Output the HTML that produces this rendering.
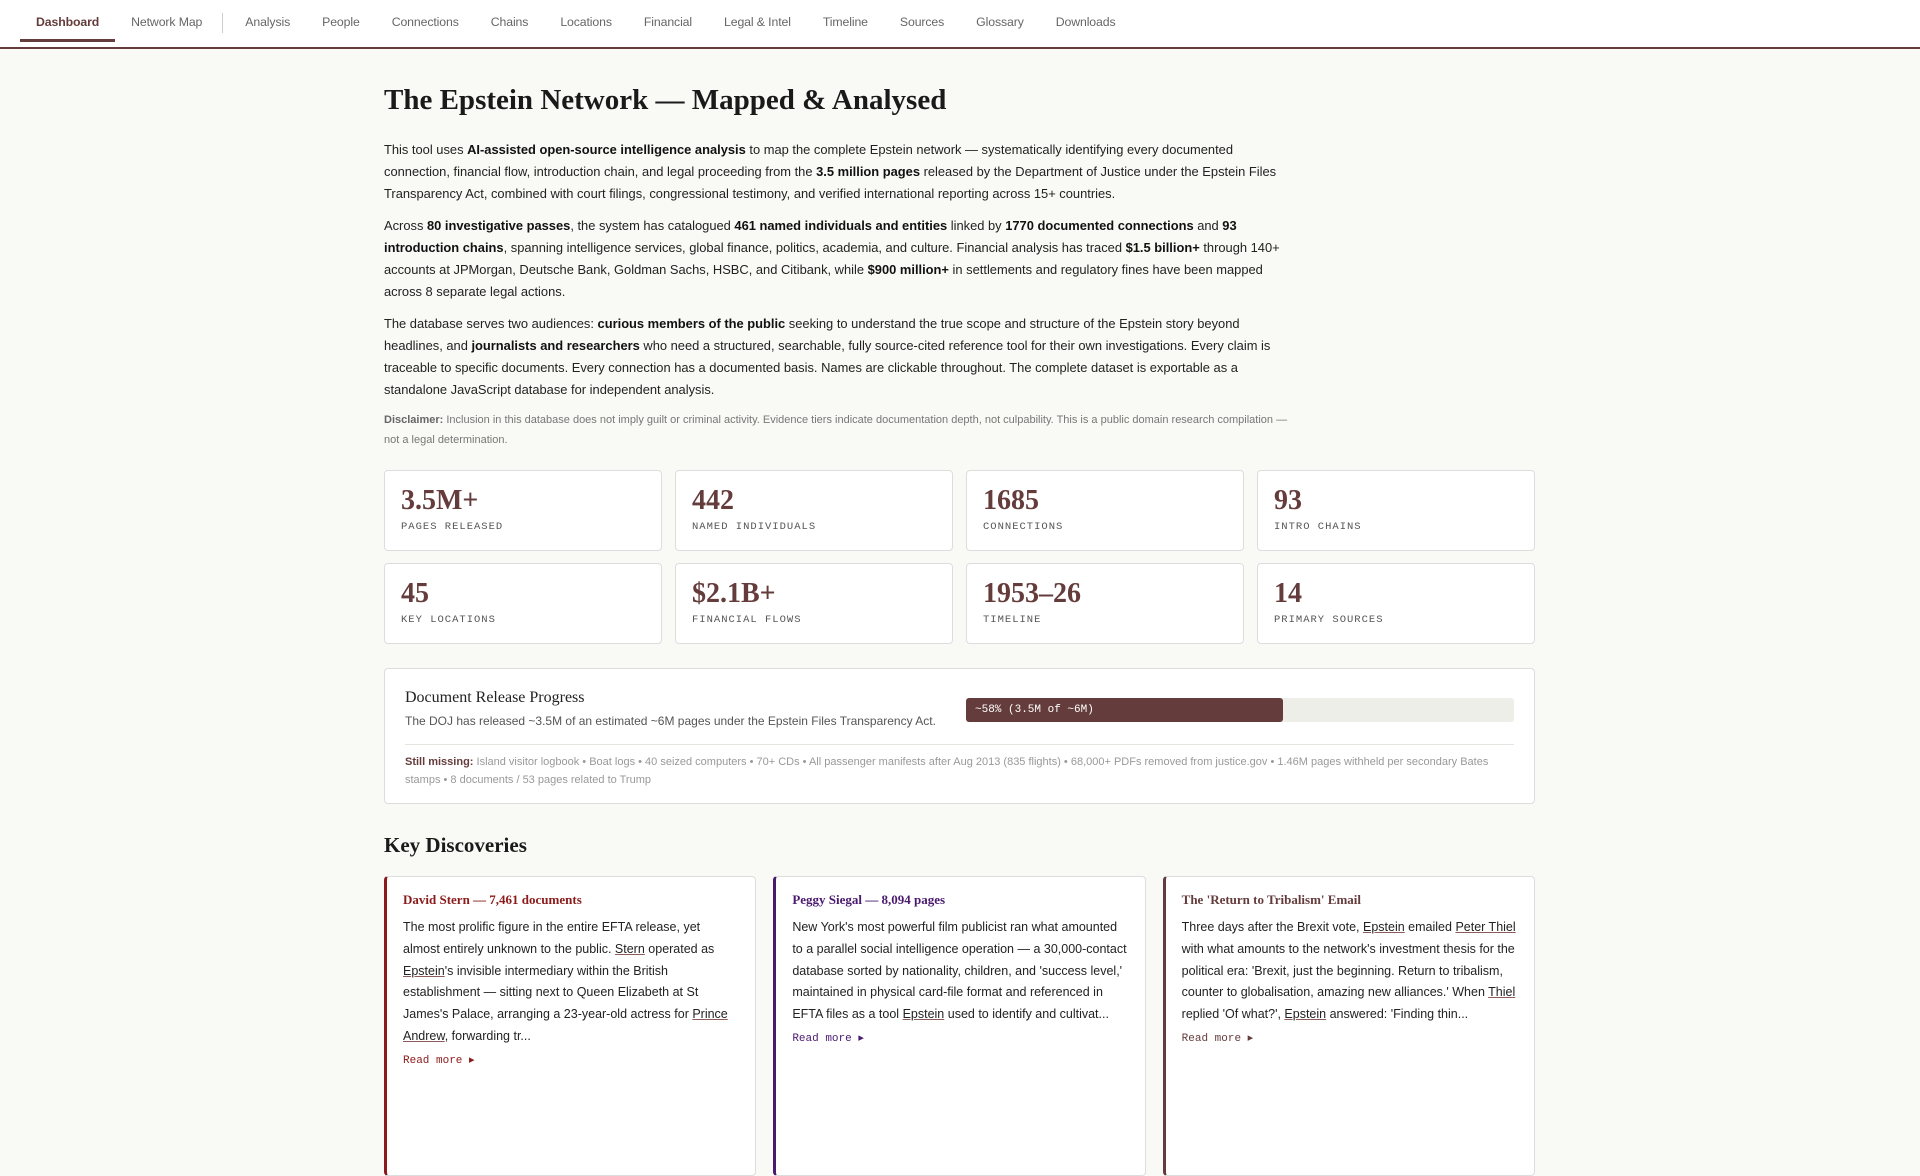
<!DOCTYPE html>
<html><head><meta charset="utf-8"><style>
*{box-sizing:border-box;margin:0;padding:0}
body{background:#f9f9f6;font-family:"Liberation Sans",Arial,sans-serif;color:#222;width:1920px;height:1080px;overflow:hidden}
nav{height:49px;border-bottom:2px solid #653c3c;background:#fff;display:flex;align-items:flex-start;padding-left:20px}
nav a{display:block;padding:0 16px;height:42px;line-height:45px;font-size:12.3px;color:#666;text-decoration:none;white-space:nowrap;letter-spacing:-0.12px}
nav a.on{color:#653c3c;font-weight:bold;border-bottom:3px solid #653c3c}
nav .sep{width:1px;height:20px;background:#ccc;margin:13px 6px 0 4px}
main{position:absolute;left:384px;top:49px;width:1151px}
h1{font-family:"Liberation Serif",serif;font-size:29px;font-weight:bold;color:#1a1a1a;margin-top:35px;line-height:32px}
p{font-size:12.9px;line-height:22px;max-width:905px;color:#222}
p b{color:#111}
.p1{margin-top:23px}
p+p{margin-top:10px}
.disc{font-size:11px;line-height:20px;color:#777;margin-top:9px;white-space:nowrap}
.disc b{color:#666}
.grid{display:grid;grid-template-columns:repeat(4,1fr);gap:12px 13px;margin-top:20px}
.card{background:#fff;border:1px solid #ddd;border-radius:4px;height:81px;padding:14px 16px}
.num{font-family:"Liberation Serif",serif;font-weight:bold;font-size:28px;color:#653c3c;line-height:32px}
.lbl{font-family:"Liberation Mono",monospace;font-size:10.5px;letter-spacing:1px;color:#555;margin-top:4px}
.prog{margin-top:24px;background:#fff;border:1px solid #ddd;border-radius:4px;height:136px;padding:19px 20px}
.row{display:flex;justify-content:space-between}
.pt{font-family:"Liberation Serif",serif;font-size:16px;color:#222;line-height:20px}
.pd{font-size:12px;color:#555;margin-top:6px}
.bar{width:548px;height:24px;background:#eeeee8;border-radius:3px;margin-top:10px}
.fill{width:317px;height:24px;background:#653c3c;border-radius:3px;color:#fff;font-family:"Liberation Mono",monospace;font-size:11px;line-height:24px;padding-left:9px}
.hr{border-top:1px solid #e6e6e0;margin-top:16px}
.miss{font-size:11px;line-height:18px;color:#999;margin-top:8px;white-space:nowrap}
.miss b{color:#653c3c}
h2{font-family:"Liberation Serif",serif;font-size:21px;font-weight:bold;color:#1a1a1a;margin-top:29px}
.dgrid{display:grid;grid-template-columns:repeat(3,1fr);gap:17px;margin-top:18px}
.dc{background:#fff;border:1px solid #ddd;border-left:3px solid;border-radius:4px;height:300px;padding:15px 8px 0 16px;overflow:hidden}
.dt{font-family:"Liberation Serif",serif;font-weight:bold;font-size:13px;line-height:16px}
.db{font-size:12.5px;line-height:21.8px;color:#222;margin-top:9px;white-space:nowrap}
.db u{text-decoration-color:#8b5a5a}
.rm{font-family:"Liberation Mono",monospace;font-size:11px;margin-top:5px}
</style></head><body>
<nav><a class="on">Dashboard</a><a>Network Map</a><span class="sep"></span><a>Analysis</a><a>People</a><a>Connections</a><a>Chains</a><a>Locations</a><a>Financial</a><a>Legal &amp; Intel</a><a>Timeline</a><a>Sources</a><a>Glossary</a><a>Downloads</a></nav>
<main>
<h1>The Epstein Network — Mapped &amp; Analysed</h1>
<p class="p1">This tool uses <b>AI-assisted open-source intelligence analysis</b> to map the complete Epstein network — systematically identifying every documented connection, financial flow, introduction chain, and legal proceeding from the <b>3.5 million pages</b> released by the Department of Justice under the Epstein Files Transparency Act, combined with court filings, congressional testimony, and verified international reporting across 15+ countries.</p>
<p>Across <b>80 investigative passes</b>, the system has catalogued <b>461 named individuals and entities</b> linked by <b>1770 documented connections</b> and <b>93 introduction chains</b>, spanning intelligence services, global finance, politics, academia, and culture. Financial analysis has traced <b>$1.5 billion+</b> through 140+ accounts at JPMorgan, Deutsche Bank, Goldman Sachs, HSBC, and Citibank, while <b>$900 million+</b> in settlements and regulatory fines have been mapped across 8 separate legal actions.</p>
<p>The database serves two audiences: <b>curious members of the public</b> seeking to understand the true scope and structure of the Epstein story beyond headlines, and <b>journalists and researchers</b> who need a structured, searchable, fully source-cited reference tool for their own investigations. Every claim is traceable to specific documents. Every connection has a documented basis. Names are clickable throughout. The complete dataset is exportable as a standalone JavaScript database for independent analysis.</p>
<p class="disc"><b>Disclaimer:</b> Inclusion in this database does not imply guilt or criminal activity. Evidence tiers indicate documentation depth, not culpability. This is a public domain research compilation —<br>not a legal determination.</p>
<div class="grid">
<div class="card"><div class="num">3.5M+</div><div class="lbl">PAGES RELEASED</div></div>
<div class="card"><div class="num">442</div><div class="lbl">NAMED INDIVIDUALS</div></div>
<div class="card"><div class="num">1685</div><div class="lbl">CONNECTIONS</div></div>
<div class="card"><div class="num">93</div><div class="lbl">INTRO CHAINS</div></div>
<div class="card"><div class="num">45</div><div class="lbl">KEY LOCATIONS</div></div>
<div class="card"><div class="num">$2.1B+</div><div class="lbl">FINANCIAL FLOWS</div></div>
<div class="card"><div class="num">1953–26</div><div class="lbl">TIMELINE</div></div>
<div class="card"><div class="num">14</div><div class="lbl">PRIMARY SOURCES</div></div>
</div>
<div class="prog">
<div class="row"><div><div class="pt">Document Release Progress</div><div class="pd">The DOJ has released ~3.5M of an estimated ~6M pages under the Epstein Files Transparency Act.</div></div>
<div class="bar"><div class="fill">~58% (3.5M of ~6M)</div></div></div>
<div class="hr"></div>
<div class="miss"><b>Still missing:</b> Island visitor logbook • Boat logs • 40 seized computers • 70+ CDs • All passenger manifests after Aug 2013 (835 flights) • 68,000+ PDFs removed from justice.gov • 1.46M pages withheld per secondary Bates<br>stamps • 8 documents / 53 pages related to Trump</div>
</div>
<h2>Key Discoveries</h2>
<div class="dgrid">
<div class="dc" style="border-left-color:#8b1a1a"><div class="dt" style="color:#8b1a1a">David Stern — 7,461 documents</div><div class="db">The most prolific figure in the entire EFTA release, yet<br>almost entirely unknown to the public. <u>Stern</u> operated as<br><u>Epstein</u>'s invisible intermediary within the British<br>establishment — sitting next to Queen Elizabeth at St<br>James's Palace, arranging a 23-year-old actress for <u>Prince</u><br><u>Andrew</u>, forwarding tr...</div><div class="rm" style="color:#8b1a1a">Read more ▸</div></div>
<div class="dc" style="border-left-color:#4a1a6e"><div class="dt" style="color:#4a1a6e">Peggy Siegal — 8,094 pages</div><div class="db">New York's most powerful film publicist ran what amounted<br>to a parallel social intelligence operation — a 30,000-contact<br>database sorted by nationality, children, and 'success level,'<br>maintained in physical card-file format and referenced in<br>EFTA files as a tool <u>Epstein</u> used to identify and cultivat...</div><div class="rm" style="color:#4a1a6e">Read more ▸</div></div>
<div class="dc" style="border-left-color:#653c3c"><div class="dt" style="color:#653c3c">The 'Return to Tribalism' Email</div><div class="db">Three days after the Brexit vote, <u>Epstein</u> emailed <u>Peter Thiel</u><br>with what amounts to the network's investment thesis for the<br>political era: 'Brexit, just the beginning. Return to tribalism,<br>counter to globalisation, amazing new alliances.' When <u>Thiel</u><br>replied 'Of what?', <u>Epstein</u> answered: 'Finding thin...</div><div class="rm" style="color:#653c3c">Read more ▸</div></div>
</div>
</main>
</body></html>
